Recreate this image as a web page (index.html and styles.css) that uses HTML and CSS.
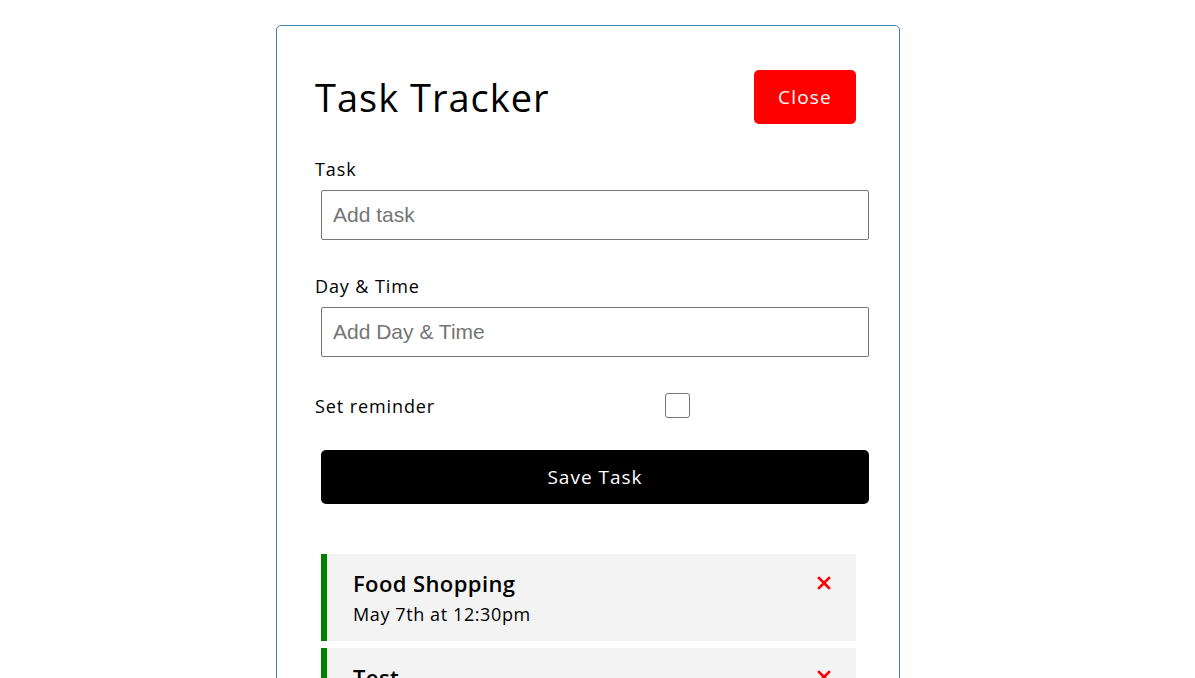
FILE: index.html
```html
<!DOCTYPE html>
<html lang="en">
<head>
<meta charset="utf-8">
<title>Task Tracker</title>
<link rel="stylesheet" href="styles.css">
</head>
<body>
<div class="container">
  <header class="header">
    <h1 class="title">Task Tracker</h1>
    <button class="btn btn-close">Close</button>
  </header>
  <form class="add-form">
    <div class="form-control">
      <label class="label">Task</label>
      <input class="field" type="text" placeholder="Add task">
    </div>
    <div class="form-control form-control-second">
      <label class="label">Day &amp; Time</label>
      <input class="field" type="text" placeholder="Add Day &amp; Time">
    </div>
    <div class="form-control form-control-check">
      <label class="label check-label">Set reminder</label>
      <div class="check-wrap"><input class="check" type="checkbox"></div>
    </div>
    <button type="button" class="btn btn-block">Save Task</button>
  </form>
  <div class="tasks">
    <div class="task reminder">
      <h3 class="task-title">Food Shopping
        <svg class="del" viewBox="0 0 14 14" width="14" height="14"><path d="M2 2 L12 12 M12 2 L2 12" stroke="#ff0000" stroke-width="2.6" stroke-linecap="square" fill="none"/></svg>
      </h3>
      <p class="task-day">May 7th at 12:30pm</p>
    </div>
    <div class="task reminder">
      <h3 class="task-title">Test
        <svg class="del" viewBox="0 0 14 14" width="14" height="14"><path d="M2 2 L12 12 M12 2 L2 12" stroke="#ff0000" stroke-width="2.6" stroke-linecap="square" fill="none"/></svg>
      </h3>
      <p class="task-day">May 8th at 1:00pm</p>
    </div>
  </div>
</div>
</body>
</html>
```

FILE: styles.css
```css
* { box-sizing: border-box; }
body {
  margin: 0;
  background: #fff;
  font-family: "Open Sans", "Noto Sans", sans-serif;
  color: #000;
  overflow: hidden;
}
.container {
  width: 624px;
  margin: 25px 0 0 276px;
  border: 1px solid steelblue;
  border-radius: 5px;
  padding: 38px;
  min-height: 700px;
}
.header {
  display: flex;
  justify-content: space-between;
  align-items: center;
  height: 65px;
}
.title {
  margin: 0;
  font-size: 38px;
  font-weight: 500;
  letter-spacing: 1px;
}
.btn {
  display: block;
  border: none;
  border-radius: 5px;
  background: #000;
  color: #fff;
  font-family: inherit;
  font-size: 19px;
  letter-spacing: 1px;
  cursor: pointer;
}
.btn-close {
  background: #ff0000;
  width: 102px;
  height: 54px;
  margin: 5px 5px 5px 0;
  letter-spacing: 1.2px;
}
.add-form { margin: 0; }
.form-control {
  display: flex;
  flex-direction: column;
  margin-top: 27px;
}
.form-control-second { margin-top: 28px; }
.label {
  display: block;
  font-size: 18px;
  line-height: 26px;
  letter-spacing: 0.9px;
}
.field {
  display: block;
  width: calc(100% + 2px);
  height: 50px;
  margin: 8px 0 5px 6px;
  padding: 3px 11px;
  border: 1px solid #767676;
  border-radius: 2px;
  font-family: "Liberation Sans", Arial, sans-serif;
  font-size: 21px;
  color: #000;
}
.field::placeholder { color: #757575; }
.form-control-check {
  flex-direction: row;
  align-items: center;
  height: 33px;
}
.check-label { flex: 1; }
.check-wrap {
  flex: 2;
  display: flex;
  justify-content: center;
}
.check {
  appearance: none;
  -webkit-appearance: none;
  width: 25px;
  height: 25px;
  margin: 0 0 0 -4px;
  border: 1px solid #767676;
  border-radius: 3px;
  background: #fff;
}
.btn-block {
  width: calc(100% + 2px);
  height: 54px;
  margin: 28px 0 0 6px;
}
.tasks { margin-top: 50px; }
.task {
  background: #f3f3f3;
  margin: 0 5px 7px 6px;
  padding: 14px 25px 0 26px;
  height: 87px;
}
.task.reminder { border-left: 6px solid #008000; }
.task-title {
  display: flex;
  justify-content: space-between;
  align-items: center;
  margin: 0;
  font-size: 22px;
  font-weight: 600;
  line-height: 30px;
  letter-spacing: 0.4px;
}
.task-day {
  margin: 3px 0 0;
  font-size: 18px;
  line-height: 26px;
  letter-spacing: 0.6px;
}
```
